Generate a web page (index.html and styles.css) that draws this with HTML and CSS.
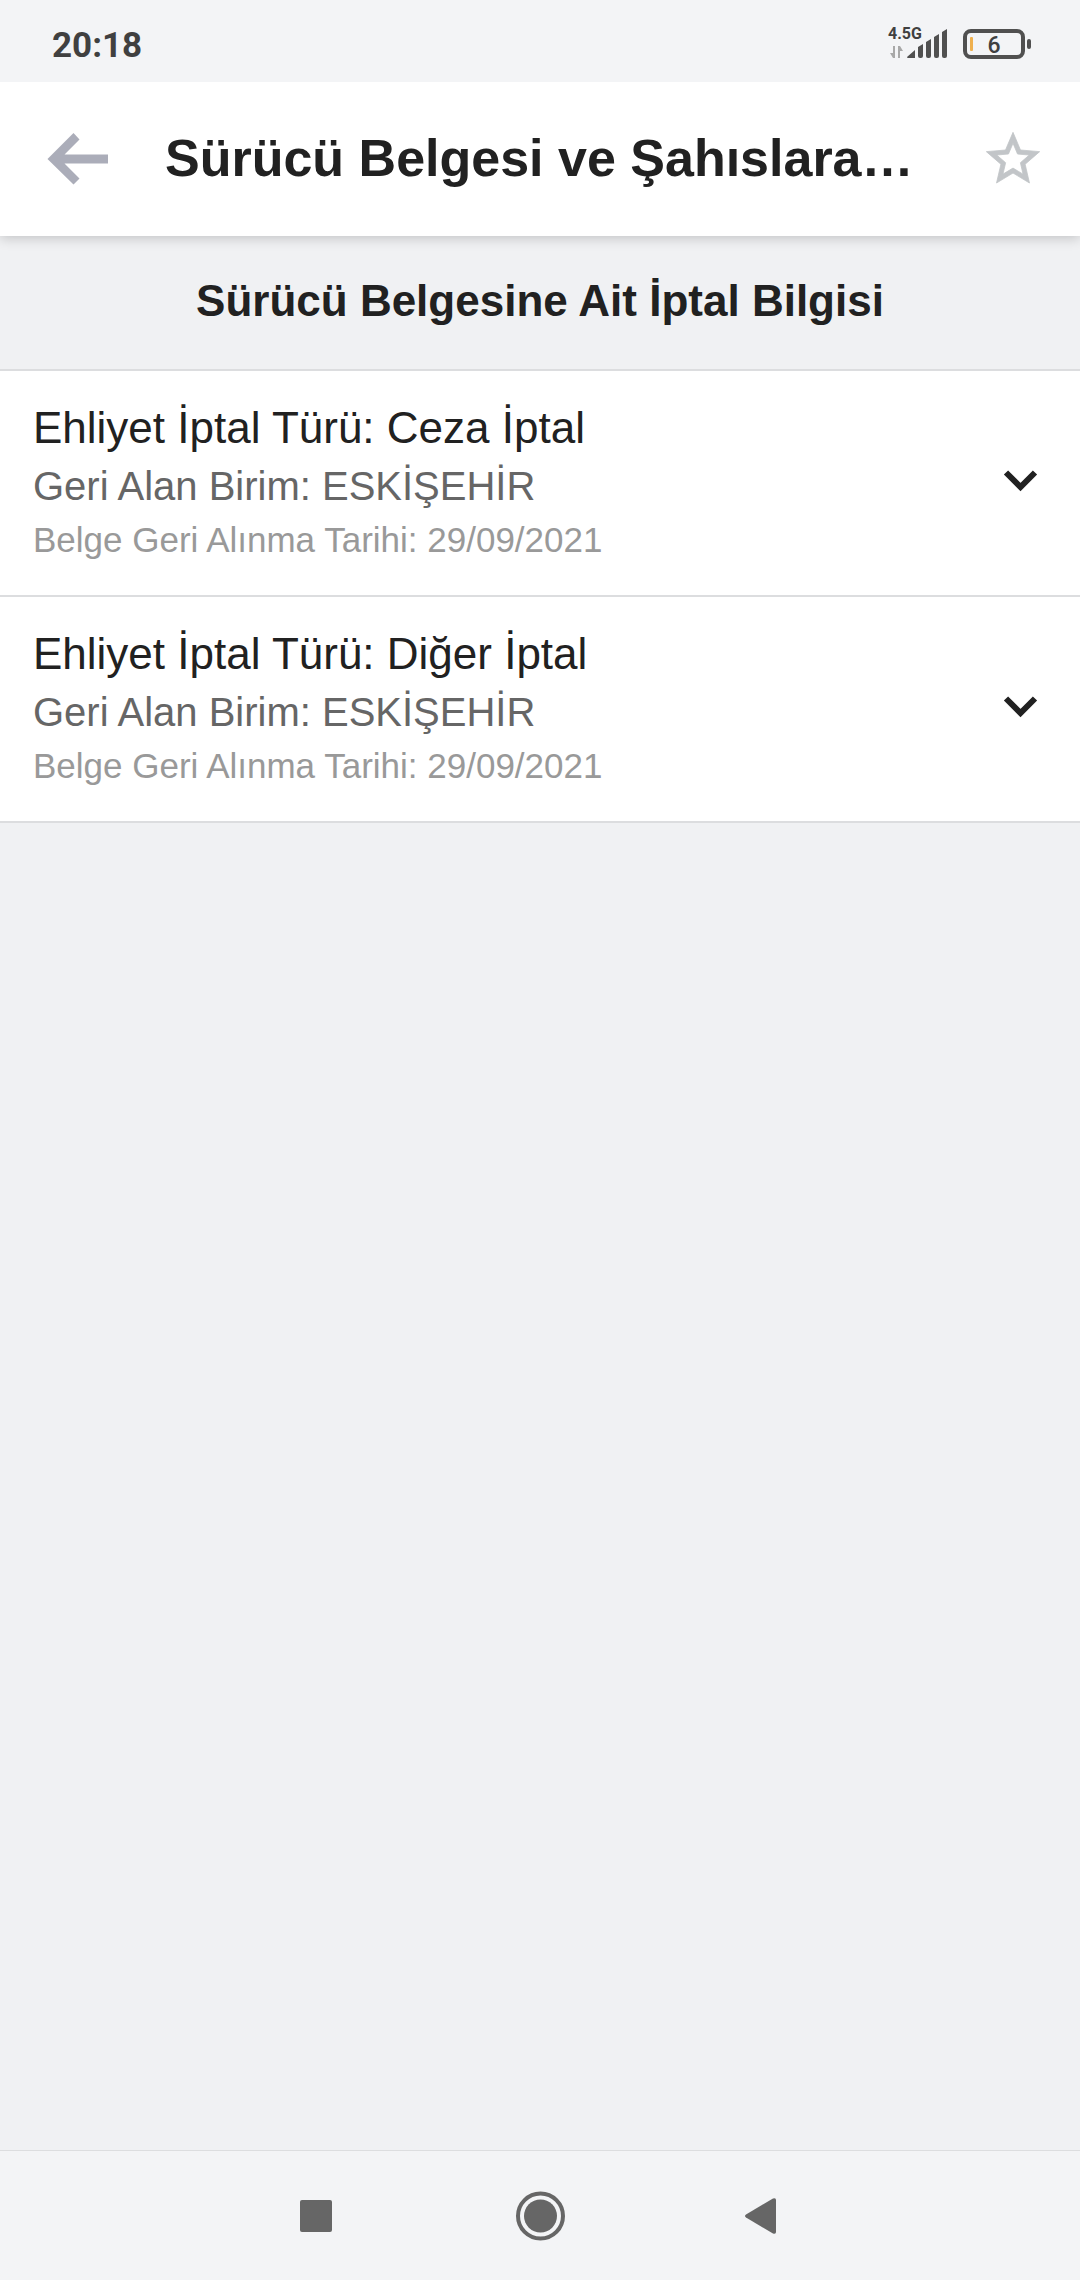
FILE: index.html
```html
<!DOCTYPE html>
<html lang="tr">
	<head>
		<meta charset="UTF-8">
		<meta name="viewport" content="width=device-width, initial-scale=1">
		<title>Sürücü Belgesi</title>
		<link rel="stylesheet" href="styles.css">
	</head>
	<body>
		<div id="status-bar">
			<span class="clock">20:18</span>
			<svg class="indicators" viewBox="0 0 150 40">
				<text class="network" x="4" y="14">4.5G</text>
				<!-- data arrows -->
				<path class="data" d="M11 21v12h-2l-3-5h3v-7zM14 21h2l3 5h-3v7h-2z"/>
				<!-- signal -->
				<path class="dark" d="M23 32l8-7v8h-7q-1 0-1-1zM34 22l5-3v12q0 2-2 2h-1q-2 0-2-2zM42 17l5-3v17q0 2-2 2h-1q-2 0-2-2zM50 12l5-3v22q0 2-2 2h-1q-2 0-2-2zM58 7l5-3v27q0 2-2 2h-1q-2 0-2-2z"/>
				<!-- battery -->
				<rect class="battery" x="81" y="6" width="58" height="26" rx="6"/>
				<rect class="dark" x="143" y="14" width="4" height="10" rx="2"/>
				<rect class="charge" x="86" y="12" width="3" height="14" rx="1"/>
				<text class="percent" x="110" y="28">6</text>
			</svg>
		</div>

		<header>
			<button class="icon-btn" aria-label="Geri">
				<svg viewBox="0 0 64 64"><path fill="#abadb9" d="M1.5 32L27.5 6l6 6.500L18.500 27.500H62v9H18.500l15 15-6 6z"/></svg>
			</button>
			<h1>Sürücü Belgesi ve Şahıslara…</h1>
			<button class="icon-btn" aria-label="Favorilere ekle">
				<svg viewBox="0 0 24 24"><path fill="#c2c5c8" stroke="#c2c5c8" stroke-width=".3" d="M22 9.240l-7.190-.620L12 2 9.190 8.630 2 9.240l5.460 4.730L5.820 21 12 17.270 18.180 21l-1.630-7.030L22 9.240zM12 15.400l-3.760 2.270 1-4.280-3.320-2.880 4.380-.380L12 6.100l1.710 4.040 4.380.380-3.320 2.880 1 4.280L12 15.400z"/></svg>
			</button>
		</header>

		<main>
			<h2>Sürücü Belgesine Ait İptal Bilgisi</h2>

			<ul class="list">
				<li>
					<button class="row" aria-expanded="false">
						<span class="info">
							<span class="type">Ehliyet İptal Türü: Ceza İptal</span>
							<span class="unit">Geri Alan Birim: ESKİŞEHİR</span>
							<span class="date">Belge Geri Alınma Tarihi: 29/09/2021</span>
						</span>
						<svg class="chevron" viewBox="0 0 40 40"><path d="M6 10.500L20.500 25 35 10.500"/></svg>
					</button>
				</li>
				<li>
					<button class="row" aria-expanded="false">
						<span class="info">
							<span class="type">Ehliyet İptal Türü: Diğer İptal</span>
							<span class="unit">Geri Alan Birim: ESKİŞEHİR</span>
							<span class="date">Belge Geri Alınma Tarihi: 29/09/2021</span>
						</span>
						<svg class="chevron" viewBox="0 0 40 40"><path d="M6 10.500L20.500 25 35 10.500"/></svg>
					</button>
				</li>
			</ul>
		</main>

		<nav>
			<button aria-label="Son uygulamalar">
				<svg viewBox="0 0 56 56"><rect x="12" y="12" width="32" height="32" rx="2"/></svg>
			</button>
			<button aria-label="Ana ekran">
				<svg viewBox="0 0 56 56"><circle cx="28.500" cy="28" r="16.500"/><circle class="ring" cx="28.500" cy="28" r="22.500"/></svg>
			</button>
			<button aria-label="Geri dön">
				<svg viewBox="0 0 56 56"><path d="M10 26.500L37 10.500q3-1 3 1.500v32q0 2.500-3 1.500L10 29.500q-2-1.500 0-3z"/></svg>
			</button>
		</nav>
	</body>
</html>
```

FILE: styles.css
```css
body
{
	margin: 0;
	min-height: 100vh;
	display: flex;
	flex-direction: column;
	background: #f0f1f3;
	color: #212121;
	font-family: "Liberation Sans", Arial, sans-serif;
}

button
{
	padding: 0;
	border: 0;
	background: none;
	color: inherit;
	font: inherit;
	cursor: pointer;
}

svg
{
	display: block;
}

/* status bar */

#status-bar
{
	display: flex;
	align-items: center;
	justify-content: space-between;
	position: relative;
	z-index: 1;
	box-sizing: border-box;
	height: 82px;
	padding: 8px 46px 0 52px;
	background: #f3f4f6;
	color: #404040;
	font-family: Roboto, sans-serif;
}

.clock
{
	font-size: 35px;
	font-weight: 700;
}

.indicators
{
	width: 150px;
	height: 40px;
}

.indicators text
{
	fill: #404040;
}

.network
{
	font-size: 16px;
	font-weight: 700;
}

.percent
{
	font-size: 23px;
	font-weight: 500;
	text-anchor: middle;
}

.dark   { fill: #505050; }
.data   { fill: #a8a8a8; }
.charge { fill: #efb04e; }

.battery
{
	fill: none;
	stroke: #505050;
	stroke-width: 4;
}

/* title bar */

header
{
	display: flex;
	align-items: center;
	position: relative;
	height: 154px;
	padding: 0 35px 0 46px;
	background: #fff;
	box-shadow: 0 2px 12px rgba(0, 0, 0, .2);
}

h1
{
	flex: 1;
	min-width: 0;
	margin: 0 16px 0 55px;
	padding-bottom: 3px;
	overflow: hidden;
	text-overflow: ellipsis;
	white-space: nowrap;
	font-size: 52px;
	line-height: 64px;
}

.icon-btn,
.icon-btn svg
{
	width: 64px;
	height: 64px;
}

/* content */

main
{
	flex: 1;
}

h2
{
	margin: 0;
	padding: 36px 32px 39px;
	font-size: 44px;
	line-height: 58px;
	text-align: center;
}

.list
{
	margin: 0;
	padding: 0;
	list-style: none;
	border-top: 2px solid #dcdddf;
}

.list li
{
	background: #fff;
	border-bottom: 2px solid #dcdddf;
}

.row
{
	display: flex;
	align-items: center;
	justify-content: space-between;
	width: 100%;
	padding: 27px 40px 29px 33px;
	text-align: left;
}

.info span
{
	display: block;
}

.type
{
	font-size: 44px;
	line-height: 60px;
}

.unit
{
	color: #666;
	font-size: 40px;
	line-height: 56px;
}

.date
{
	color: #999;
	font-size: 35px;
	line-height: 52px;
}

.chevron
{
	flex: none;
	width: 40px;
	height: 40px;
	fill: none;
	stroke: #212121;
	stroke-width: 6;
}

/* system buttons */

nav
{
	display: flex;
	justify-content: center;
	border-top: 1px solid #dcdddf;
	background: #f3f4f6;
}

nav button
{
	width: 224px;
	height: 129px;
}

nav svg
{
	width: 56px;
	height: 56px;
	margin: auto;
	fill: #666;
}

nav .ring
{
	fill: none;
	stroke: #666;
	stroke-width: 4;
}
```
